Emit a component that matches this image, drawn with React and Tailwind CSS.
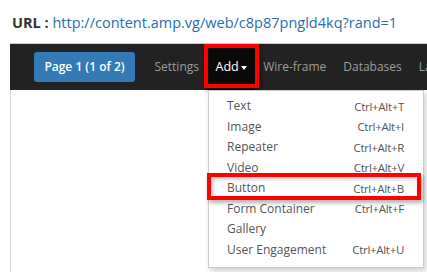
import React from 'react'

const navItems = ['Settings', 'Add', 'Wire-frame', 'Databases', 'Layout']

const menuItems = [
  { label: 'Text', keys: 'Ctrl+Alt+T' },
  { label: 'Image', keys: 'Ctrl+Alt+I' },
  { label: 'Repeater', keys: 'Ctrl+Alt+R' },
  { label: 'Video', keys: 'Ctrl+Alt+V' },
  { label: 'Button', keys: 'Ctrl+Alt+B' },
  { label: 'Form Container', keys: 'Ctrl+Alt+F' },
  { label: 'Gallery', keys: '' },
  { label: 'User Engagement', keys: 'Ctrl+Alt+U' },
]

export default function App(){
  return (
    <div className="relative w-[427px] h-[272px] overflow-hidden bg-white font-['Open_Sans',sans-serif]">
      <div className="pl-[12px] pt-[13px] h-[43px] text-[14.5px] leading-[20px] whitespace-nowrap">
        <span className="font-bold text-[#333]">URL :</span>{' '}
        <span className="text-[#2a6db0]">http://content.amp.vg/web/c8p87pngld4kq?rand=1</span>
      </div>

      <div className="ml-[10px] border-t border-[#cfcfcf]">
        <div className="flex items-center h-[46px] w-[600px] bg-[#222] pl-[24px] overflow-hidden">
          <button className="h-[30px] w-[101px] rounded-[3px] bg-[#337ab7] text-white text-[12px] font-semibold">
            Page 1 (1 of 2)
          </button>
          <ul className="flex h-full items-center ml-[11px] text-[12px] text-[#9d9d9d]">
            {navItems.map(n => n === 'Add' ? (
              <li key={n} className="flex items-center h-full pl-[8px] pr-[8px] bg-[#0a0a0a] text-white text-[12.5px]">
                Add
                <span className="ml-[2px] mt-[1px] border-x-[3.5px] border-t-[4px] border-x-transparent border-t-white"></span>
              </li>
            ) : (
              <li key={n} className="px-[8.5px]">{n}</li>
            ))}
          </ul>
        </div>
        <div className="h-[200px] border-l border-[#d5d5d5]"></div>
      </div>

      <div className="absolute left-[204px] top-[44px] w-[55px] h-[44px] border-[4px] border-[#f00] shadow-[2px_3px_4px_rgba(0,0,0,0.35)]"></div>

      <div className="absolute left-[208px] top-[90px] w-[216px] pt-[5px] pb-[7px] bg-white border border-[#ccc] shadow-[2px_3px_6px_rgba(0,0,0,0.2)] text-[12px] text-[#555]">
        {menuItems.map(m => (
          <div key={m.label} className="flex justify-between items-center h-[20.5px] pl-[18px] pr-[19px]">
            <span>{m.label}</span>
            <span className="text-[11.5px] tracking-[-0.3px]">{m.keys}</span>
          </div>
        ))}
      </div>

      <div className="absolute left-[207px] top-[173px] w-[214px] h-[27px] border-[4px] border-[#f00] shadow-[inset_2px_2px_4px_rgba(0,0,0,0.25),2px_3px_4px_rgba(0,0,0,0.3)]"></div>
    </div>
  )
}
